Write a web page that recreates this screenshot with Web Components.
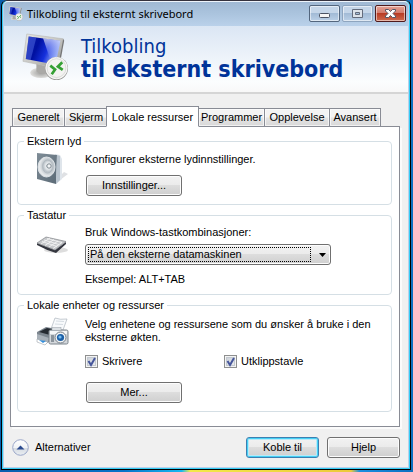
<!DOCTYPE html>
<html lang="nb">
<head>
<meta charset="utf-8">
<title>Tilkobling til eksternt skrivebord</title>
<style>
html,body{margin:0;min-height:100%}
body{min-height:100vh;display:flex;font:11px/13px "Liberation Sans",Arial,sans-serif;color:#000;
 background:linear-gradient(90deg,#0a5fae 0,#0873c8 30%,#18b8f0 44%,#f2e94a 46%,#ecc93a 85%,#1c8fe0 87%,#0d6fc0 100%)}
remote-dialog{flex:1}
</style>
</head>
<body>
<remote-dialog></remote-dialog>
<script>
const define=(name,html,setup)=>{
  const t=document.createElement('template');
  t.innerHTML=html;
  customElements.define(name,class extends HTMLElement{
    constructor(){
      super();
      this.attachShadow({mode:'open'}).append(t.content.cloneNode(true));
    }
    connectedCallback(){ if(setup) setup(this,this.shadowRoot); }
  });
};

define('monitor-icon',`
<style>:host{display:block}svg{display:block;width:100%;height:100%}</style>
<svg viewBox="0 0 48 50" aria-hidden="true">
 <defs>
  <linearGradient id="f" x1="0" y1="0" x2="1" y2="1"><stop offset="0" stop-color="#e8e8e4"/><stop offset=".5" stop-color="#c9c9c6"/><stop offset="1" stop-color="#8d8d8b"/></linearGradient>
  <linearGradient id="s" x1="0" y1="0" x2="1" y2=".35"><stop offset="0" stop-color="#0a1cae"/><stop offset=".4" stop-color="#0010a0"/><stop offset=".7" stop-color="#1530dc"/><stop offset="1" stop-color="#9fb4f6"/></linearGradient>
  <linearGradient id="g" x1="0" y1="0" x2="0" y2="1"><stop offset="0" stop-color="#fff" stop-opacity=".65"/><stop offset="1" stop-color="#4f6cff" stop-opacity=".1"/></linearGradient>
  <radialGradient id="b"><stop offset="0" stop-color="#9d9d9b"/><stop offset="1" stop-color="#dededc"/></radialGradient>
 </defs>
 <ellipse cx="20" cy="41.500" rx="11.500" ry="5.500" fill="url(#b)"/>
 <path d="M15 32 L27 35 L26 42 Q20 44 15 40Z" fill="#aaa9a6"/>
 <path d="M5 1 L43 6 L37 37 L1 29.500Z" fill="url(#f)" stroke="#b5b5b2" stroke-width=".6"/>
 <path d="M43 6 L44 8 L38.500 38 L37 37Z" fill="#777"/>
 <path d="M7 3.500 L40 8 L35 33 L4 27Z" fill="url(#s)"/>
 <path d="M7 3.500 L15 4.600 L9 28 L4 27Z" fill="#5d78ea" opacity=".45"/>
 <path d="M22 5.500 L40 8 L35 33 L31 32.200Z" fill="url(#g)"/>
 <circle cx="36" cy="37" r="12" fill="#999996"/>
 <circle cx="36" cy="36.600" r="11.200" fill="#f3f3f1" stroke="#fff" stroke-width=".8"/>
 <circle cx="36" cy="36.600" r="9.800" fill="none" stroke="#d2d2cf" stroke-width=".7"/>
 <path d="M29.500 34 L34.500 38 L31 43 M42 30.500 L37.500 35 L42.500 38.500" fill="none" stroke="#35a034" stroke-width="2.800"/>
</svg>`);

define('caption-bar',`
<style>
:host{display:flex;align-items:flex-start;height:24px;padding:0 2px 0 4px;background:linear-gradient(#a0b9d4,#abc4de 50%,#bad1ea)}
monitor-icon{width:15px;height:15px;margin:4px 4px 0 0}
.t{flex:1;font:11px/24px "Noto Sans",sans-serif;white-space:nowrap}
.b{display:flex;gap:2px;padding-top:3px}
button{box-sizing:border-box;width:31px;height:17px;padding:0;border:1px solid #53667e;border-radius:2px;box-shadow:inset 0 0 0 1px #ffffff88;background:linear-gradient(#c5d6e9 0 48%,#a2bbd6 50%,#bbd0e7)}
button[disabled]{border-color:#8ea5bf}
.x{border-color:#4f1a1c;background:linear-gradient(#e4a397 0,#d2796a 48%,#b93c25 50%,#ce6b4e)}
svg{display:block;margin:auto}
</style>
<monitor-icon></monitor-icon><span class="t"><slot></slot></span>
<span class="b">
<button aria-label="Minimer"><svg width="13" height="13"><rect x="1.500" y="6.500" width="10" height="4" rx="1" fill="#f5f5f5" stroke="#4b5363"/></svg></button>
<button aria-label="Maksimer" disabled><svg width="13" height="13"><path fill-rule="evenodd" d="M1.500 2.500h10v8h-10zM4.500 5.500v2h4v-2z" fill="#dde3ea" stroke="#646c7c"/></svg></button>
<button class="x" aria-label="Lukk"><svg width="13" height="13"><path d="M1.500 2.500h3l2 2 2-2h3v1.500l-2.500 2.500 2.500 2.500v1.500h-3l-2-2-2 2h-3V9L4 6.500 1.500 4z" fill="#fff" stroke="#545767"/></svg></button>
</span>`);

define('app-banner',`
<style>
:host{display:flex;align-items:flex-start;gap:13px;padding:7px 18px 11px;border-bottom:2px solid #d5d5d5;background:linear-gradient(#dbe6f4,#fbfdfe 85%,#f8f8f8);color:#003399}
monitor-icon{width:46px;height:48px;flex:none}
h1{margin:2px 0 0;font:20px/22px "DejaVu Sans Condensed","DejaVu Sans",sans-serif;white-space:nowrap}
.a{display:block}
b{display:block;font-size:23px;line-height:24px}
</style>
<monitor-icon></monitor-icon><h1><span class="a"><slot></slot></span><b><slot name="strong"></slot></b></h1>`);

define('tab-strip',`
<style>
:host{display:flex;align-items:flex-end;padding-left:2px;position:relative;margin-bottom:-1px}
</style><slot></slot>`);

define('tab-item',`
<style>
:host{display:block;flex:none}
button{box-sizing:border-box;display:block;height:19px;width:100%;padding:0 2px;border:1px solid #898c95;font:inherit;line-height:17px;color:inherit;white-space:nowrap;box-shadow:inset 0 0 0 1px #ffffffaa;background:linear-gradient(#f3f3f3 0 48%,#e4e4e4 52%,#d8d8d8)}
:host(:not(:last-child)) button{border-right-width:0}
:host([selected]) button{height:21px;border-bottom-color:#fff;background:#fff;box-shadow:none;border-right-width:1px;line-height:18px}
:host([selected]){margin-right:-1px;margin-left:-1px;z-index:1}
</style><button role="tab"><slot></slot></button>`,(h,r)=>{
  r.querySelector('button').setAttribute('aria-selected',h.hasAttribute('selected'));
});

define('group-box',`
<style>
:host{display:block}
fieldset{margin:0;padding:0 10px 8px 18px;border:1px solid #d5dfe5;border-radius:4px;min-width:0}
legend{margin-left:-12px;padding:0 3px}
.r{display:flex;align-items:flex-start;gap:16px;padding-top:4px}
.i{flex:none;width:33px}
.c{flex:1;display:flex;flex-direction:column;align-items:flex-start;min-width:0}
</style>
<fieldset><legend><slot name="title"></slot></legend><div class="r"><div class="i"><slot name="icon"></slot></div><div class="c"><slot></slot></div></div></fieldset>`);

define('push-button',`
<style>
:host{display:block;flex:none}
button{box-sizing:border-box;display:block;width:100%;height:21px;padding:0;border:1px solid #707070;border-radius:3px;font:inherit;color:inherit;box-shadow:inset 0 0 0 1px #fcfcfc;background:linear-gradient(#f2f2f2,#ebebeb 49%,#dddddd 50%,#cfcfcf)}
:host([default]) button{border-color:#3c7fb1;box-shadow:inset 0 0 0 1px #45d0f5,inset 0 0 0 2px #b8e9f8}
</style><button><slot></slot></button>`);

define('drop-down',`
<style>
:host{display:grid}
label{grid-area:1/1;padding-bottom:5px}
select{grid-area:2/1;appearance:none;box-sizing:border-box;width:100%;height:21px;margin:0;padding:0 24px 0 4px;border:1px solid #707070;border-radius:3px;outline:0;font:inherit;color:inherit;box-shadow:inset 0 0 0 1px #fcfcfc;background:linear-gradient(#f2f2f2,#ebebeb 49%,#dddddd 50%,#cfcfcf)}
.f{grid-area:2/1;margin:3px 20px 3px 3px;border:1px dotted #000;pointer-events:none}
svg{grid-area:2/1;place-self:center end;margin-right:5px;pointer-events:none}
</style>
<label for="s"></label><select id="s"><option></option></select><span class="f"></span>
<svg width="7" height="4" aria-hidden="true"><path d="M0 0h7L3.500 4z"/></svg>`,(h,r)=>{
  r.querySelector('label').textContent=h.getAttribute('label');
  r.querySelector('option').textContent=h.getAttribute('value');
});

define('check-box',`
<style>
:host{display:block}
label{display:flex;align-items:center;gap:4px}
.w{display:grid}
input{grid-area:1/1;appearance:none;box-sizing:border-box;width:13px;height:13px;margin:0;border:1px solid #8e8f8f;background:linear-gradient(135deg,#c4cad2,#f2f3f5);box-shadow:inset 0 0 0 1px #f4f4f4,inset 0 0 0 2px #c3c9d0}
svg{grid-area:1/1;display:none;pointer-events:none}
input:checked+svg{display:block}
</style>
<label><span class="w"><input type="checkbox" checked><svg width="13" height="13"><path d="M3.500 6l2.500 4 4-7" fill="none" stroke="#46569b" stroke-width="2"/></svg></span><span><slot></slot></span></label>`);

define('expander-toggle',`
<style>
:host{display:block;flex:1}
button{display:flex;align-items:center;gap:6px;padding:0;border:0;background:none;font:inherit;color:inherit}
svg{display:block}
</style>
<button aria-expanded="true"><svg width="17" height="17"><defs><linearGradient id="e" x1="0" y1="0" x2="0" y2="1"><stop offset="0" stop-color="#fff"/><stop offset=".5" stop-color="#f1f3f6"/><stop offset=".52" stop-color="#d6dbe2"/><stop offset="1" stop-color="#e9eef2"/></linearGradient></defs><circle cx="8.500" cy="8.500" r="7.800" fill="url(#e)" stroke="#9aa6c8"/><path d="M4.500 10.500h8l-4-4z" fill="#2b4a8e"/></svg><slot></slot></button>`);

define('remote-dialog',`
<style>
:host{display:flex;flex-direction:column;margin:0 2px 2px 1px;border:1px solid #000;border-top-color:#35323e;border-radius:6px 6px 0 0;background:#35cdf5;padding:0 1px 1px}
.win{flex:1;display:flex;flex-direction:column;background:#f0f0f0;border:1px solid #bad1ea;border-top-color:#eef4fb;border-radius:5px 5px 0 0;overflow:hidden}
.body{flex:1;display:flex;flex-direction:column;padding:12px 8px 0 6px}
.panel{flex:1;display:flex;flex-direction:column;gap:4px;padding:8px 7px 14px 6px;background:#fff;border:1px solid #898c95;box-shadow:2px 2px 0 #fbfbfb}
.foot{display:flex;align-items:center;gap:8px;padding:10px 8px 9px}
.foot push-button{width:73px}
.wide{width:96px;margin-left:1px}
.checks{display:grid;grid-template-columns:139px auto;padding:9px 0 14px}
drop-down{width:246px;max-width:100%}
.p{padding:2px 0}
.first{padding-top:1px}
.after{padding-top:8px}
.gap{margin-top:9px}
</style>
<div class="win">
<caption-bar>Tilkobling til eksternt skrivebord</caption-bar>
<app-banner>Tilkobling<span slot="strong">til eksternt skrivebord</span></app-banner>
<div class="body">
<tab-strip role="tablist">
<tab-item style="width:52px">Generelt</tab-item><tab-item style="width:43px">Skjerm</tab-item><tab-item selected style="width:93px">Lokale ressurser</tab-item><tab-item style="width:66px">Programmer</tab-item><tab-item style="width:65px">Opplevelse</tab-item><tab-item style="width:52px">Avansert</tab-item>
</tab-strip>
<div class="panel">
<group-box><span slot="title">Ekstern lyd</span>
<svg slot="icon" width="33" height="33" aria-hidden="true"><defs><linearGradient id="q" x1="0" y1="0" x2="1" y2="1"><stop offset="0" stop-color="#7f8d97"/><stop offset="1" stop-color="#5b6a76"/></linearGradient><radialGradient id="k" cx=".6" cy=".45"><stop offset="0" stop-color="#8c969e"/><stop offset=".25" stop-color="#eef1f3"/><stop offset=".6" stop-color="#b9c1c7"/><stop offset="1" stop-color="#e5e8ea"/></radialGradient></defs>
<path d="M20 31l12-9-4-2-9 9z" fill="#dfe1e4"/><path d="M19 2l5 1 2 4v20l-6 5z" fill="#dfe5eb"/><path d="M1 1l20 2-1 29L1 27z" fill="url(#q)"/><path d="M21 3l3 1v24l-4 4z" fill="#b9c4ce"/><ellipse cx="10.500" cy="15" rx="8.500" ry="10" fill="url(#k)" stroke="#dfe4e8"/><ellipse cx="11.500" cy="14.500" rx="5" ry="6.500" fill="none" stroke="#a9b1b8" stroke-width=".6"/><circle cx="13" cy="14" r="2.200" fill="#f2f4f5" stroke="#7d8890"/></svg>
<span class="first">Konfigurer eksterne lydinnstillinger.</span>
<push-button class="wide gap">Innstillinger...</push-button>
</group-box>
<group-box><span slot="title">Tastatur</span>
<svg slot="icon" width="33" height="33" aria-hidden="true"><ellipse cx="20" cy="24" rx="12" ry="3" fill="#ddd"/><path d="M1 17l18 7 11-8v2l-10 9q-10-3-19-8z" fill="#34363f"/><path d="M1 17l9-6 20 4.500L19 24z" fill="#c5c7ca" stroke="#84868b" stroke-width=".7"/><path d="M6 15.500l15 5M8 14l15 4.500M11 12.500l15 4M5 18l9-6M9 19.500l9-6M13 21l9-6M17 22.500l9-6" stroke="#f8f8f8" stroke-width=".8"/></svg>
<drop-down label="Bruk Windows-tastkombinasjoner:" value="På den eksterne datamaskinen"></drop-down>
<span class="after">Eksempel: ALT+TAB</span>
</group-box>
<group-box><span slot="title">Lokale enheter og ressurser</span>
<svg slot="icon" width="33" height="33" aria-hidden="true"><path d="M15 13l4-11q5 2 12 1l-4 11z" fill="#f8fafc" stroke="#aeb6bf" stroke-width=".7"/><path d="M20 5l8 .5M19 8l8 .5" stroke="#d6dde3"/><path d="M1 16l9-5 11 2v9l-12 6-8-4z" fill="#7d868f"/><path d="M3 16l8-4 9 2-6 5z" fill="#252a31"/><path d="M1 18l12 4-1 5L1 23z" fill="#a9b1b9"/><path d="M1 23l11 3-3 3-8-3z" fill="#fff" stroke="#89929a" stroke-width=".5"/><path d="M3 24l7 1-3 2z" fill="#338edb"/><rect x="13" y="14" width="19" height="14" rx="1.500" fill="#d3d7db" stroke="#7d858d"/><path d="M14 15h17v3H14z" fill="#f6f7f8"/><rect x="16" y="11.500" width="9" height="3" fill="#dbe0e4" stroke="#969ea5" stroke-width=".5"/><circle cx="24.500" cy="21.500" r="5.500" fill="#f1f3f4" stroke="#747d86"/><circle cx="24.500" cy="21.500" r="3.600" fill="#1c5fa6"/><circle cx="24" cy="21" r="1.600" fill="#77bdf0"/><path d="M15 19h3v7h-3z" fill="#8b949c"/></svg>
<span class="p">Velg enhetene og ressursene som du ønsker å bruke i den eksterne økten.</span>
<div class="checks"><check-box>Skrivere</check-box><check-box>Utklippstavle</check-box></div>
<push-button class="wide">Mer...</push-button>
</group-box>
</div>
</div>
<div class="foot"><expander-toggle>Alternativer</expander-toggle><push-button default>Koble til</push-button><push-button>Hjelp</push-button></div>
</div>`);
</script>
</body>
</html>
